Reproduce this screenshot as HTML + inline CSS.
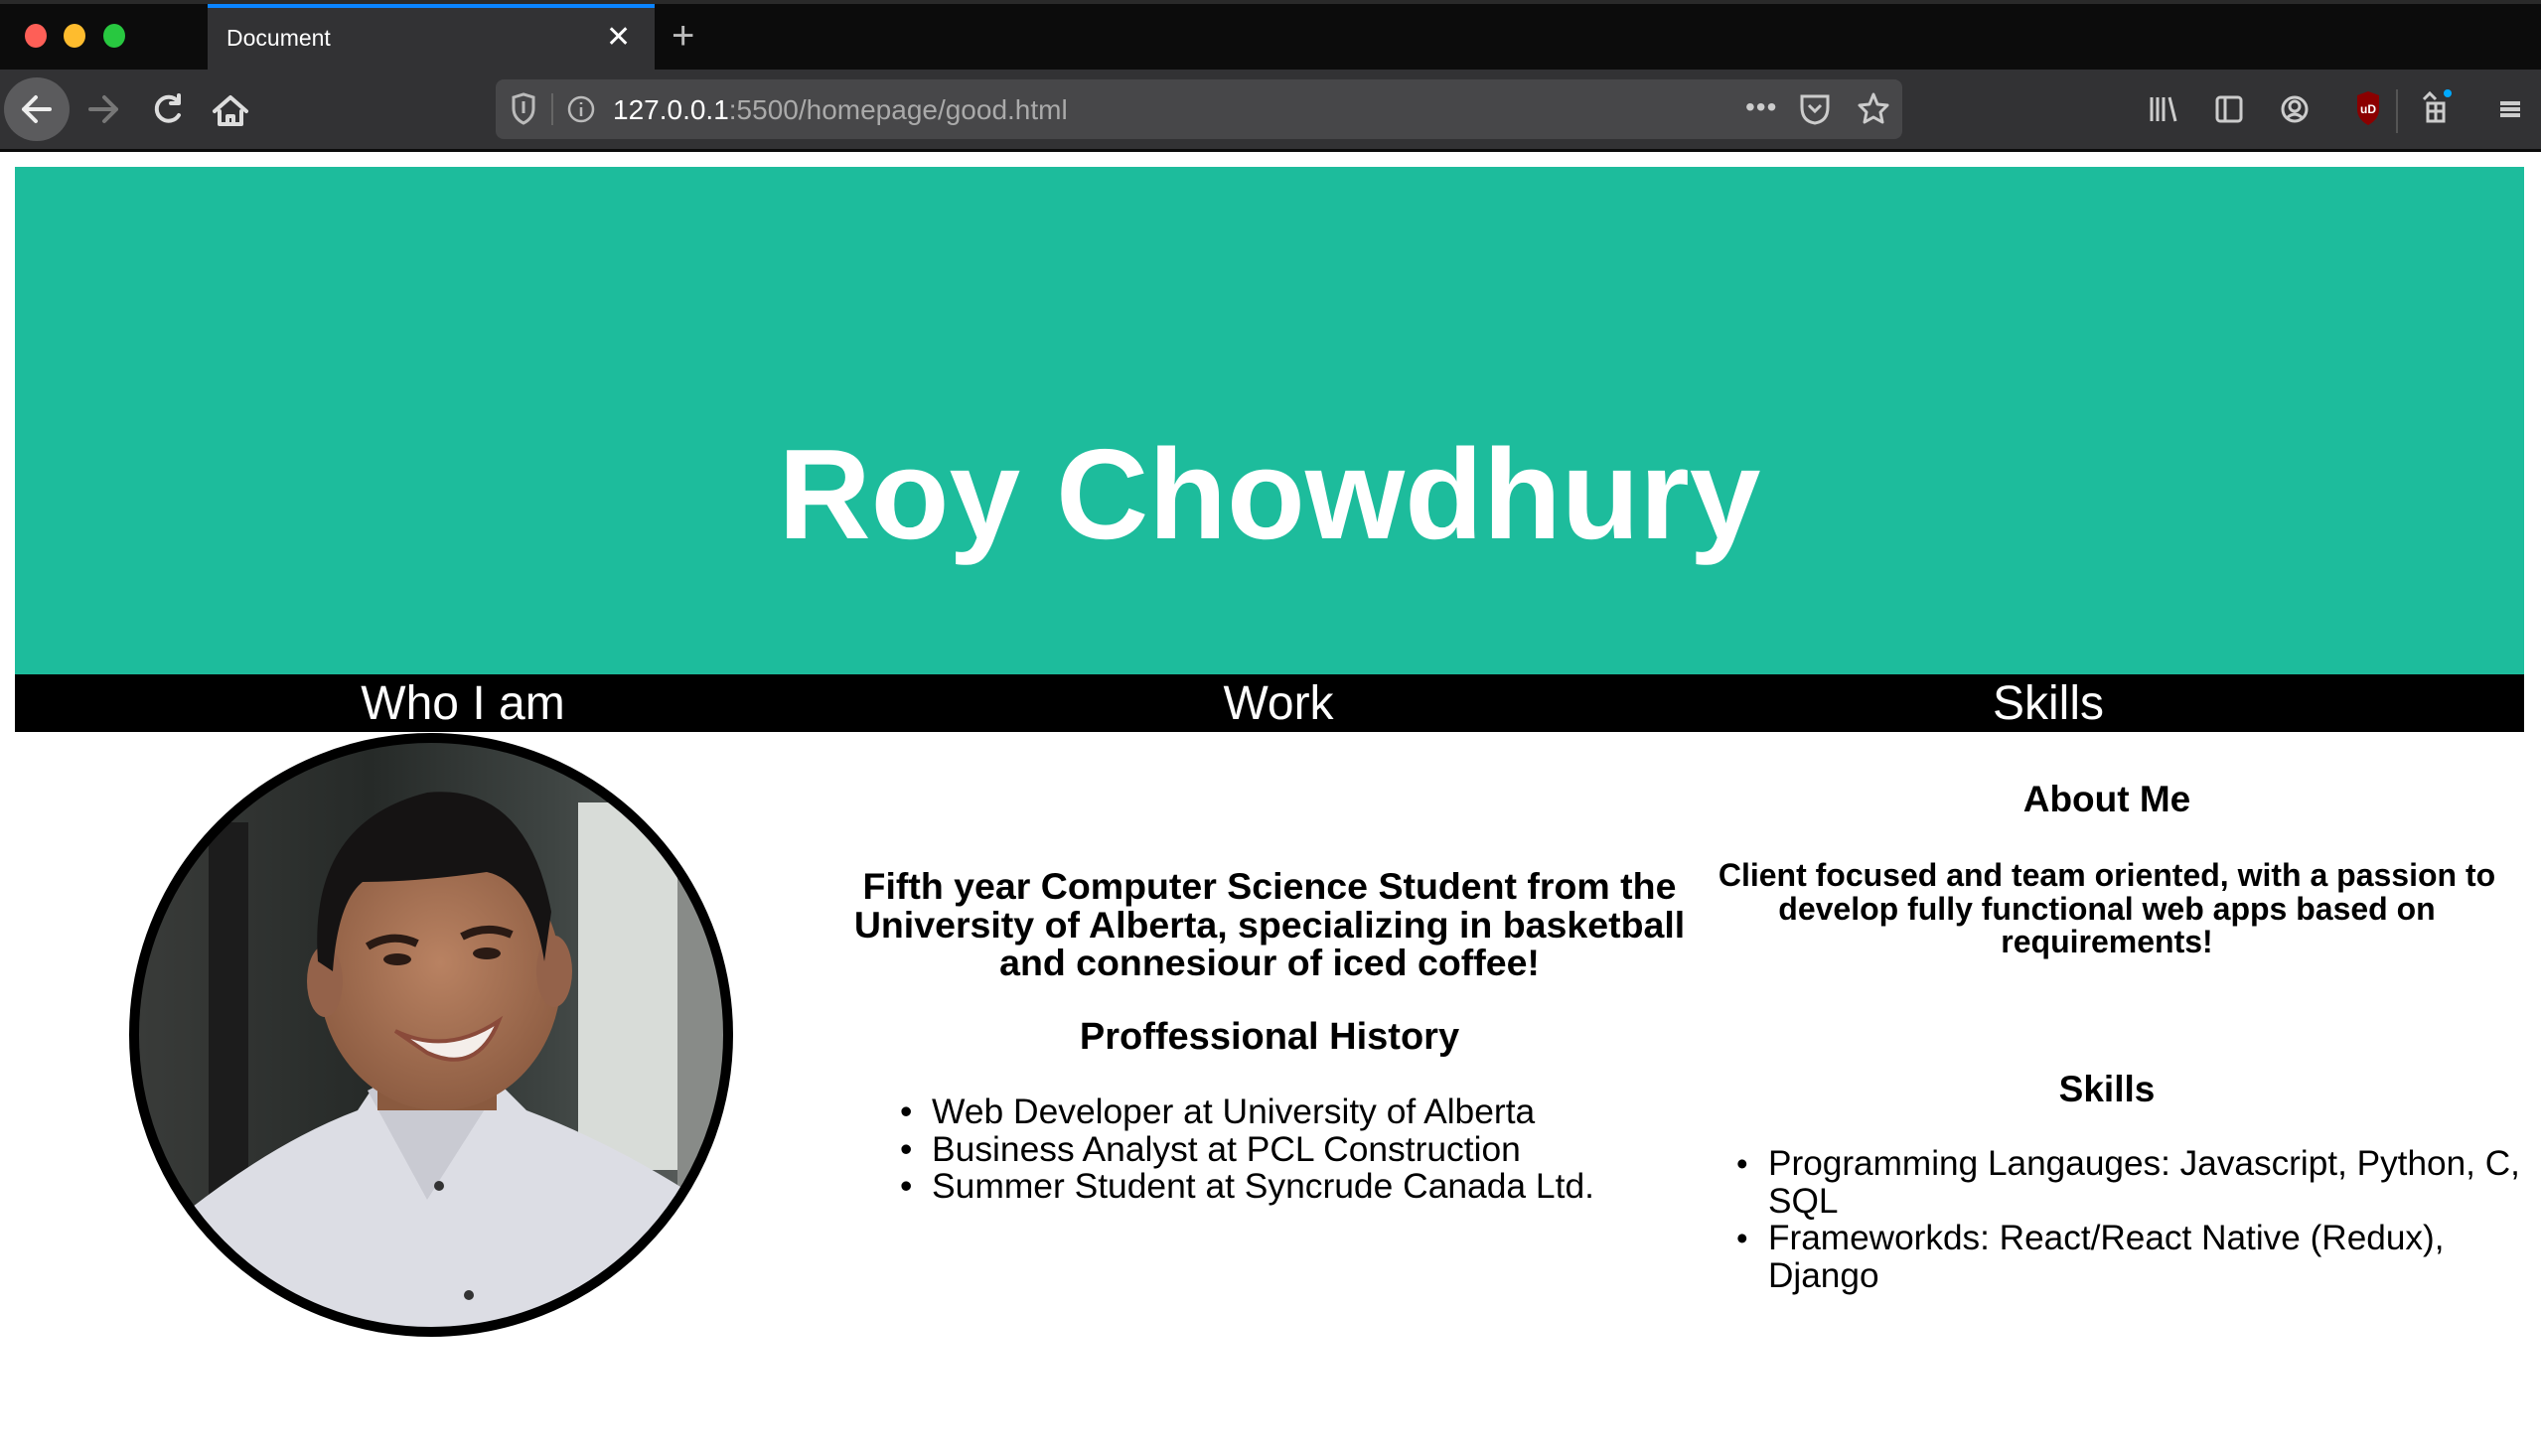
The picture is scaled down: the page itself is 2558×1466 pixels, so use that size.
<!DOCTYPE html>
<html><head><meta charset="utf-8"><style>
*{margin:0;padding:0;box-sizing:border-box}
body{width:2558px;height:1466px;background:#fff;position:relative;overflow:hidden;font-family:"Liberation Sans",Arial,sans-serif}
.a{position:absolute;white-space:nowrap}
.c{transform:translateX(-50%);text-align:center}
</style></head><body>
<!-- browser chrome -->
<div class="a" style="left:0;top:0;width:2558px;height:70px;background:#0c0c0c"></div>
<div class="a" style="left:0;top:0;width:2558px;height:4px;background:#2a2a2a"></div>
<div class="a" style="left:25px;top:24px;width:22px;height:24px;border-radius:50%;background:#fe5f57"></div>
<div class="a" style="left:64px;top:24px;width:22px;height:24px;border-radius:50%;background:#febc2e"></div>
<div class="a" style="left:104px;top:24px;width:22px;height:24px;border-radius:50%;background:#28c840"></div>
<div class="a" style="left:209px;top:4px;width:450px;height:66px;background:#323234"></div>
<div class="a" style="left:209px;top:4px;width:450px;height:4px;background:#0a84ff"></div>
<div class="a" style="left:228px;top:25px;font-size:23px;color:#fff">Document</div>
<div class="a" style="left:610px;top:20px;font-size:30px;color:#fff">✕</div>
<div class="a" style="left:676px;top:14px;font-size:40px;color:#bbb;font-weight:300">+</div>
<div class="a" style="left:0;top:70px;width:2558px;height:80px;background:#323234"></div>
<div class="a" style="left:4px;top:78px;width:66px;height:64px;border-radius:50%;background:#5b5b5d"></div>
<svg class="a" style="left:0;top:70px" width="260" height="80" viewBox="0 0 260 80">
<g fill="none" stroke-width="4" stroke-linecap="round" stroke-linejoin="round">
<path d="M50 40H24M36 28L24 40L36 52" stroke="#eee"/>
<path d="M117 40H91M105 28L117 40L105 52" stroke="#777"/>
<path d="M179 32A12 12 0 1 0 180 46M180 26V34H172" stroke="#ddd"/>
<path d="M221 42V55H243V42M216 42L232 28L248 42M229 55V47H235V55" stroke="#ddd"/>
</g></svg>
<div class="a" style="left:499px;top:80px;width:1416px;height:60px;border-radius:8px;background:#474749"></div>
<svg class="a" style="left:510px;top:92px" width="80" height="36"><path d="M7 6L17 3L27 6V17Q27 27 17 32Q7 27 7 17Z" fill="none" stroke="#bbb" stroke-width="3"/><path d="M17 10V22" stroke="#bbb" stroke-width="3"/><line x1="46" y1="2" x2="46" y2="34" stroke="#666" stroke-width="2"/></svg>
<svg class="a" style="left:570px;top:95px" width="30" height="30"><circle cx="15" cy="15" r="12" fill="none" stroke="#bbb" stroke-width="2.5"/><path d="M15 13V22M15 8V10" stroke="#bbb" stroke-width="2.5"/></svg>
<div class="a" style="left:617px;top:95px;font-size:28px;color:#fff">127.0.0.1<span style="color:#aaa">:5500/homepage/good.html</span></div>
<div class="a" style="left:1757px;top:92px;font-size:28px;color:#ccc;letter-spacing:1px">•••</div>
<svg class="a" style="left:1810px;top:92px" width="120" height="36"><path d="M4 5H30V16Q30 30 17 32Q4 30 4 16Z" fill="none" stroke="#ccc" stroke-width="3"/><path d="M11 14L17 20L23 14" fill="none" stroke="#ccc" stroke-width="3"/><path d="M76 3L80 13L90 14L83 21L85 31L76 26L67 31L69 21L62 14L72 13Z" fill="none" stroke="#ccc" stroke-width="3" stroke-linejoin="round"/></svg>
<svg class="a" style="left:2160px;top:90px" width="398" height="44"><g fill="none" stroke="#ccc" stroke-width="3">
<path d="M6 8V32M12 8V32M18 8V32M24 8L30 32"/>
<rect x="72" y="8" width="24" height="24" rx="3"/><path d="M80 8V32"/>
<circle cx="150" cy="20" r="12"/><circle cx="150" cy="17" r="5"/><path d="M142 29Q150 21 158 29"/>
<path d="M280 10L286 4L292 10"/>
<rect x="284" y="14" width="16" height="18"/><path d="M292 14V32M284 22H300"/>
<path d="M357 14H377M357 20H377M357 26H377" stroke-width="4"/>
</g>
<path d="M213 6L224 2L235 6V20Q235 30 224 36Q213 30 213 20Z" fill="#8b0000"/><text x="224" y="24" font-size="12" fill="#fff" text-anchor="middle" font-family="Liberation Sans" font-weight="bold">uD</text>
<circle cx="304" cy="4" r="4" fill="#0af"/>
<line x1="253" y1="0" x2="253" y2="44" stroke="#555" stroke-width="2"/>
</svg>
<div class="a" style="left:0;top:150px;width:2558px;height:3px;background:#0b0b0b"></div>

<!-- header -->
<div class="a" style="left:15px;top:168px;width:2526px;height:512px;background:#1dbc9c"></div>
<div class="a c" style="left:1278px;top:434px;font-size:129px;font-weight:bold;color:#fff;line-height:1">Roy Chowdhury</div>
<div class="a" style="left:15px;top:679px;width:2526px;height:58px;background:#000"></div>
<div class="a c" style="left:466px;top:681px;font-size:48px;color:#fff;line-height:56px">Who I am</div>
<div class="a c" style="left:1287px;top:681px;font-size:48px;color:#fff;line-height:56px">Work</div>
<div class="a c" style="left:2062px;top:681px;font-size:48px;color:#fff;line-height:56px">Skills</div>

<!-- photo -->
<svg class="a" style="left:130px;top:738px" width="608" height="608" viewBox="0 0 608 608">
<defs><clipPath id="cp"><circle cx="304" cy="304" r="296"/></clipPath>
<linearGradient id="bg" x1="0" x2="1"><stop offset="0" stop-color="#3a3c3a"/><stop offset=".4" stop-color="#262a28"/><stop offset=".7" stop-color="#3e4442"/><stop offset="1" stop-color="#606462"/></linearGradient>
<radialGradient id="sk" cx=".5" cy=".45" r=".6"><stop offset="0" stop-color="#b98262"/><stop offset="1" stop-color="#8a5a40"/></radialGradient></defs>
<g clip-path="url(#cp)">
<rect width="608" height="608" fill="url(#bg)"/>
<rect x="80" y="90" width="40" height="400" fill="#1c1c1c"/>
<rect x="452" y="70" width="100" height="370" fill="#d8dcd8"/>
<rect x="552" y="100" width="60" height="360" fill="#888b88"/>
<path d="M60 480Q150 410 230 380L250 350H370L400 380Q480 410 560 460L620 620H0Z" fill="#dcdde4"/>
<path d="M240 360L300 470L370 360L350 350H260Z" fill="#c9cad2"/>
<rect x="250" y="290" width="120" height="90" fill="#8a5a3f"/>
<ellipse cx="313" cy="245" rx="122" ry="135" fill="url(#sk)"/>
<ellipse cx="197" cy="250" rx="18" ry="36" fill="#94624a"/>
<ellipse cx="428" cy="240" rx="18" ry="36" fill="#94624a"/>
<path d="M190 230Q180 90 300 60Q400 50 425 180L418 230Q405 150 360 140Q290 150 235 150Q210 170 205 240Z" fill="#151313"/>
<path d="M240 215Q265 200 290 212M335 205Q360 192 385 203" stroke="#2a1a14" stroke-width="8" fill="none"/>
<ellipse cx="270" cy="228" rx="14" ry="6" fill="#2a1a14"/><ellipse cx="360" cy="222" rx="14" ry="6" fill="#2a1a14"/>
<path d="M268 300Q320 325 372 290Q350 345 300 322Z" fill="#f4eeea" stroke="#8a4a3a" stroke-width="4"/>
<circle cx="312" cy="456" r="5" fill="#333"/><circle cx="342" cy="566" r="5" fill="#333"/>
</g>
<circle cx="304" cy="304" r="299" fill="none" stroke="#000" stroke-width="10"/>
</svg>

<!-- middle -->
<div class="a c" style="left:1278px;top:873px;font-size:37.5px;font-weight:bold;line-height:38.5px">Fifth year Computer Science Student from the<br>University of Alberta, specializing in basketball<br>and connesiour of iced coffee!</div>
<div class="a c" style="left:1278px;top:1022px;font-size:38px;font-weight:bold;line-height:44px">Proffessional History</div>
<div class="a" style="left:906px;top:1101px;font-size:35.4px;line-height:37.5px">•&nbsp;&nbsp;Web Developer at University of Alberta<br>•&nbsp;&nbsp;Business Analyst at PCL Construction<br>•&nbsp;&nbsp;Summer Student at Syncrude Canada Ltd.</div>

<!-- right -->
<div class="a c" style="left:2121px;top:783px;font-size:37px;font-weight:bold;line-height:44px">About Me</div>
<div class="a c" style="left:2121px;top:865px;font-size:32px;font-weight:bold;line-height:33.5px">Client focused and team oriented, with a passion to<br>develop fully functional web apps based on<br>requirements!</div>
<div class="a c" style="left:2121px;top:1075px;font-size:37px;font-weight:bold;line-height:44px">Skills</div>
<div class="a" style="left:1748px;top:1153px;font-size:33px;line-height:37.5px">•</div>
<div class="a" style="left:1780px;top:1153px;font-size:35.2px;line-height:37.5px">Programming Langauges: Javascript, Python, C,<br>SQL<br>Frameworkds: React/React Native (Redux),<br>Django</div>
<div class="a" style="left:1748px;top:1228px;font-size:33px;line-height:37.5px">•</div>
</body></html>
